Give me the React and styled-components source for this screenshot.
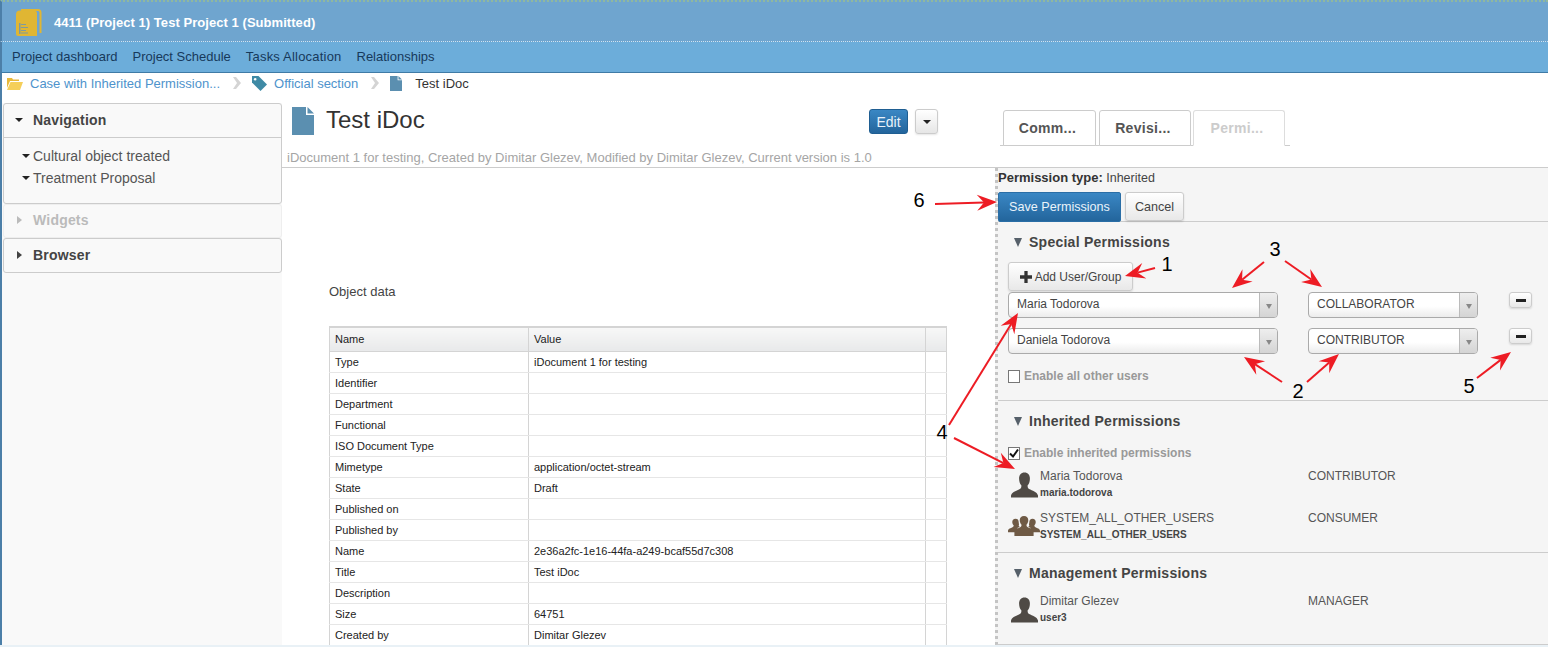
import React from 'react';
import styled, { createGlobalStyle } from 'styled-components';

const GlobalStyle = createGlobalStyle`
  html, body { margin: 0; padding: 0; background: #fff; }
  body { font-family: "Liberation Sans", Arial, sans-serif; color: #444; }
  * { box-sizing: border-box; }
`;

const Page = styled.div`
  position: relative;
  width: 1548px;
  height: 647px;
  overflow: hidden;
  display: flex;
  flex-direction: column;
  background: #fff;
`;

/* header */
const TitleBar = styled.div`
  height: 42px;
  flex: none;
  display: flex;
  align-items: center;
  gap: 12px;
  padding: 2px 0 0 14px;
  background: #6fa5cf;
  border-top: 2px dotted #8fb89f;
  border-left: 2px solid #4c7fa8;
  border-bottom: 1px dotted #cfe3f2;
`;

const TitleText = styled.div`
  color: #fff;
  font-weight: bold;
  font-size: 13px;
  letter-spacing: 0.05px;
`;

const NavBar = styled.div`
  height: 31px;
  flex: none;
  display: flex;
  align-items: center;
  gap: 15px;
  padding: 0 0 1px 10px;
  background: #6cadda;
  border-left: 2px solid #4c7fa8;
  border-bottom: 1px solid #3f7ba6;
`;

const NavLink = styled.span`
  color: #17395a;
  font-size: 13px;
  letter-spacing: ${(p) => p.$ls || 0}px;
`;

const Crumbs = styled.div`
  height: 20px;
  flex: none;
  display: flex;
  align-items: center;
  padding-left: 5px;
  border-left: 2px solid #4c7fa8;
  font-size: 13px;
`;

const CrumbLink = styled.span`
  color: ${(p) => (p.$current ? '#333' : '#4e93cc')};
  margin: ${(p) => (p.$current ? '0 0 0 13px' : '0 0 0 7px')};
`;

const CrumbSep = styled.svg`
  margin: 0 11px 0 13px;
`;

/* body */
const Body = styled.div`
  flex: 1;
  display: flex;
  min-height: 0;
  padding-top: 10px;
  border-left: 2px solid #4c7fa8;
`;

const Sidebar = styled.aside`
  width: 280px;
  flex: none;
  padding-left: 1px;
  background: #f9f9f9;
`;

const Panel = styled.section`
  border: 1px solid ${(p) => (p.$muted ? '#eee' : '#ccc')};
  border-radius: 3px;
  background: #f9f9f9;
`;

const PanelHead = styled.div`
  height: ${(p) => p.$h}px;
  display: flex;
  align-items: center;
  padding: 0 0 2px 11px;
  font-weight: bold;
  font-size: 14px;
  letter-spacing: 0.2px;
  color: ${(p) => (p.$muted ? '#bbb' : '#444')};
  border-bottom: ${(p) => (p.$open ? '1px solid #ccc' : 'none')};
`;

const Caret = styled.i`
  display: block;
  width: 0;
  height: 0;
  margin-right: ${(p) => (p.$right ? '11px' : '10px')};
  border-style: solid;
  border-color: transparent;
  ${(p) =>
    p.$right
      ? `border-width: 4px 0 4px 5px; border-left-color: ${p.$muted ? '#bbb' : '#444'}; margin-left: 2px;`
      : 'border-width: 4px 4px 0 4px; border-top-color: #222;'}
`;

const TreeList = styled.div`
  height: 65px;
  padding: 7px 0 0 18px;
`;

const TreeItem = styled.div`
  height: 22px;
  display: flex;
  align-items: center;
  font-size: 14px;
  color: #555;
`;

const TreeCaret = styled(Caret)`
  margin-right: 3px;
`;

const Main = styled.main`
  flex: 1;
  display: flex;
  flex-direction: column;
  min-width: 0;
`;

const TopRow = styled.div`
  height: 65px;
  flex: none;
  display: flex;
  border-bottom: 1px solid #ccc;
`;

const DocHead = styled.div`
  width: 714px;
  flex: none;
  padding-left: 5px;
`;

const DocTitleRow = styled.div`
  height: 47px;
  display: flex;
  align-items: flex-start;
  padding-left: 5px;
`;

const DocIcon = styled.div`
  margin-top: 4px;
  svg { display: block; }
`;

const DocTitle = styled.h1`
  margin: 0 0 0 12px;
  font-size: 24px;
  line-height: 34px;
  font-weight: normal;
  color: #333;
  flex: 1;
`;

const EditButton = styled.button`
  width: 39px;
  height: 25px;
  margin-top: 6px;
  padding: 0;
  font: 14px "Liberation Sans", Arial, sans-serif;
  color: #e8f2fa;
  background: linear-gradient(#3a87c4, #23659c);
  border: 1px solid #1f5e92;
  border-radius: 3px;
`;

const CaretButton = styled.button`
  width: 23px;
  height: 25px;
  margin: 6px 58px 0 7px;
  padding: 0 0 0 7px;
  background: linear-gradient(#fff, #e6e6e6);
  border: 1px solid #ccc;
  border-radius: 3px;
  box-shadow: 0 1px 2px rgba(0, 0, 0, 0.1);
`;

const DocMeta = styled.div`
  font-size: 13px;
  line-height: 16px;
  color: #a5a5a5;
`;

const Tabs = styled.div`
  width: 290px;
  height: 36px;
  margin: 7px 0 0 4px;
  padding-left: 3px;
  display: flex;
  gap: 3px;
  border-bottom: 1px solid #ccc;
`;

const Tab = styled.div`
  width: ${(p) => p.$w}px;
  height: 36px;
  margin-left: ${(p) => (p.$active ? '-1px' : '0')};
  display: flex;
  align-items: center;
  justify-content: center;
  padding-right: 4px;
  font-weight: bold;
  font-size: 14px;
  letter-spacing: 0.3px;
  color: ${(p) => (p.$active ? '#ccc' : '#555')};
  background: #fff;
  border: 1px solid ${(p) => (p.$active ? '#ddd' : '#ccc')};
  border-bottom: ${(p) => (p.$active ? '1px solid #fff' : '1px solid #ccc')};
  border-radius: 3px 3px 0 0;
`;

const Columns = styled.div`
  flex: 1;
  display: flex;
  min-height: 0;
`;

const DocBody = styled.div`
  width: 713px;
  flex: none;
  padding: 116px 0 0 47px;
  overflow: hidden;
`;

const SectionLabel = styled.p`
  margin: 0 0 26px;
  font-size: 13px;
  line-height: 16px;
  color: #444;
`;

const DataTable = styled.table`
  width: 617px;
  border-collapse: collapse;
  table-layout: fixed;
  font-family: "Liberation Sans", Tahoma, sans-serif;
  font-size: 11px;
  color: #222;
`;

const Th = styled.th`
  height: 24px;
  padding: 0 5px;
  font-weight: normal;
  text-align: left;
  background: linear-gradient(#f7f7f7, #e8e9ea);
  border: 1px solid #d4d4d4;
  border-top-width: 2px;
`;

const Td = styled.td`
  height: 21px;
  padding: 0 5px;
  border: 1px solid #e6e6e6;
  border-left-color: #d4d4d4;
  border-right-color: #d4d4d4;
`;

/* permissions */
const PermPanel = styled.div`
  flex: 1;
  background: #f5f5f5;
  border-left: 3px dotted #c4c4c4;
  border-bottom: 1px solid #ccc;
  font-size: 12px;
`;

const PermHead = styled.div`
  height: 54px;
  border-bottom: 1px solid #ccc;
`;

const PermType = styled.div`
  height: 24px;
  line-height: 19px;
  font-size: 12.5px;
  color: #444;
  b { color: #333; font-size: 13px; }
`;

const PermActions = styled.div`
  display: flex;
  gap: 4px;
`;

const SaveButton = styled.button`
  width: 123px;
  height: 30px;
  padding: 0;
  font: 12.6px "Liberation Sans", Arial, sans-serif;
  color: #eaf3fa;
  background: linear-gradient(#3a87c4, #23659c);
  border: 1px solid #2a6ea6;
  border-radius: 2px;
`;

const GreyButton = styled.button`
  display: flex;
  align-items: center;
  justify-content: center;
  gap: ${(p) => (p.$gap ? `${p.$gap}px` : '0')};
  width: ${(p) => p.$w}px;
  height: ${(p) => p.$h}px;
  margin-bottom: ${(p) => (p.$mb ? `${p.$mb}px` : '0')};
  padding: 0;
  font: ${(p) => p.$fs || 12}px "Liberation Sans", Arial, sans-serif;
  color: #444;
  background: linear-gradient(#fff, #e8e8e8);
  border: 1px solid #ccc;
  border-radius: 3px;
  box-shadow: 0 1px 2px rgba(0, 0, 0, 0.12);
`;

const PermSection = styled.section`
  height: ${(p) => p.$h}px;
  padding-left: 10px;
  border-bottom: ${(p) => (p.$last ? 'none' : '1px solid #ccc')};
`;

const PermTitle = styled.h3`
  height: 40px;
  margin: 0 0 0 6px;
  display: flex;
  align-items: center;
  font-size: 14px;
  letter-spacing: 0.25px;
  color: #444;
`;

const DownMark = styled.i`
  display: block;
  width: 0;
  height: 0;
  margin-right: 7px;
  border-style: solid;
  border-color: #56606a transparent transparent;
  border-width: 9px 4px 0;
`;

const SpecialRow = styled.div`
  display: flex;
  margin-bottom: 10px;
`;

const Select = styled.div`
  width: ${(p) => p.$w}px;
  height: 26px;
  margin-right: ${(p) => p.$mr}px;
  display: flex;
  align-items: center;
  padding-left: 8px;
  border: 1px solid #aaa;
  border-radius: 4px;
  background: linear-gradient(#fff 55%, #ececec);
  color: #444;
  overflow: hidden;
`;

const SelectValue = styled.span`
  flex: 1;
  padding-bottom: 3px;
`;

const SelectArrow = styled.span`
  width: 18px;
  height: 100%;
  display: flex;
  align-items: center;
  justify-content: center;
  padding-top: 3px;
  background: linear-gradient(#eee, #d4d4d4);
  border-left: 1px solid #bbb;
  &::after {
    content: '';
    border-style: solid;
    border-color: #888 transparent transparent;
    border-width: 5px 3px 0;
  }
`;

const CheckLine = styled.label`
  display: flex;
  align-items: center;
  gap: 4px;
  margin-top: ${(p) => p.$mt}px;
  font-weight: bold;
  color: #999;
`;

const CheckBox = styled.span`
  width: 12px;
  height: 13px;
  display: block;
  border: 1px solid #777;
  background: #fff;
  svg { display: block; }
`;

const UserList = styled.div`
  margin-top: ${(p) => p.$mt}px;
`;

const UserRow = styled.div`
  height: 42px;
  display: grid;
  grid-template-columns: 32px 268px 1fr;
`;

const UserIcon = styled.div`
  padding: ${(p) => (p.$group ? '6px 0 0' : '4px 0 0 3px')};
  svg { display: block; }
`;

const UserText = styled.div`
  font-size: 12px;
  line-height: 16px;
  color: #555;
`;

const UserLogin = styled.div`
  margin-top: 1px;
  font-size: 10px;
  font-weight: bold;
  color: #444;
`;

const UserRole = styled.div`
  font-size: 12px;
  line-height: 16px;
  color: #555;
`;

const Footer = styled.div`
  height: 2px;
  flex: none;
  background: #e9f1f6;
`;

/* annotations drawn over the page */
const Overlay = styled.svg`
  position: absolute;
  inset: 0;
  pointer-events: none;
`;

const Mark = styled.text`
  font-family: "Liberation Sans", Arial, sans-serif;
  font-size: 20px;
  fill: #000;
  text-anchor: middle;
`;

const Arrow = ({ from, to }) => {
  const a = Math.atan2(to[1] - from[1], to[0] - from[0]);
  const pt = (back, side) => [
    to[0] - back * Math.cos(a) - side * Math.sin(a),
    to[1] - back * Math.sin(a) + side * Math.cos(a),
  ];
  const head = [to, pt(20, 8), pt(13, 0), pt(20, -8)].map((p) => p.join(',')).join(' ');
  const end = pt(13, 0);
  return (
    <g>
      <line x1={from[0]} y1={from[1]} x2={end[0]} y2={end[1]} stroke="#ed1c24" strokeWidth="2" />
      <polygon points={head} fill="#ed1c24" />
    </g>
  );
};

const FileIcon = ({ w = 12, h = 15 }) => (
  <svg width={w} height={h} viewBox="0 0 22 28" preserveAspectRatio="none">
    <path d="M0 0h14v8h8v20H0z" fill="#5b8fb0" />
    <path d="M15.500 0L22 6.500h-6.500z" fill="#5b8fb0" />
  </svg>
);

const Person = () => (
  <svg width="27" height="26" viewBox="0 0 28 26">
    <path
      d="M14 0c-3.600 0-5.600 2.600-5.600 6.400 0 3 1 5.400 2.400 7 0 1.800-.4 3-1.600 3.800C6 19 1 19.800 0 24v2h28v-2c-1-4.200-6-5-9.200-6.800-1.200-.8-1.600-2-1.600-3.800 1.400-1.600 2.400-4 2.400-7C19.600 2.600 17.600 0 14 0z"
      fill="#4f4a45"
    />
  </svg>
);

const People = () => (
  <svg width="32" height="20" viewBox="0 0 30 22" preserveAspectRatio="none">
    <g fill="#6f5a45">
      <path d="M7 3c-2 0-3 1.500-3 3.500 0 1.600.6 3 1.300 3.800 0 1-.3 1.700-1 2.100C2.800 13.400 0 14 0 16.500V18h9v-5l2-1c-.6-.5-1-1-1-1.700C10.700 9.500 10 8 10 6.500 10 4.500 9 3 7 3z" />
      <path d="M23 3c2 0 3 1.500 3 3.500 0 1.600-.6 3-1.300 3.800 0 1 .3 1.700 1 2.100 1.500 1 4.300 1.600 4.300 4.100V18h-9v-5l-2-1c.6-.5 1-1 1-1.700C19.300 9.500 20 8 20 6.500 20 4.500 21 3 23 3z" />
      <path d="M15 0c-2.600 0-4 2-4 4.600 0 2.100.8 3.900 1.700 5 0 1.300-.3 2.200-1.300 2.800-2.100 1.300-5.400 2-5.400 5V22h18v-4.600c0-3-3.300-3.700-5.400-5-1-.6-1.300-1.500-1.300-2.800.9-1.100 1.700-2.900 1.700-5C19 2 17.600 0 15 0z" />
    </g>
  </svg>
);

const rows = [
  ['Type', 'iDocument 1 for testing'],
  ['Identifier', ''],
  ['Department', ''],
  ['Functional', ''],
  ['ISO Document Type', ''],
  ['Mimetype', 'application/octet-stream'],
  ['State', 'Draft'],
  ['Published on', ''],
  ['Published by', ''],
  ['Name', '2e36a2fc-1e16-44fa-a249-bcaf55d7c308'],
  ['Title', 'Test iDoc'],
  ['Description', ''],
  ['Size', '64751'],
  ['Created by', 'Dimitar Glezev'],
];

const Chevron = () => (
  <CrumbSep width="8" height="12" viewBox="0 0 8 12">
    <path d="M0 0h3l5 6-5 6H0l4-6z" fill="#d4d4d4" />
  </CrumbSep>
);

const Minus = () => (
  <GreyButton $w={23} $h={16}>
    <svg width="10" height="3" viewBox="0 0 10 3">
      <rect width="10" height="3" fill="#222" />
    </svg>
  </GreyButton>
);

const App = () => {
  return (
    <Page>
      <GlobalStyle />
      <TitleBar>
        <svg width="26" height="28" viewBox="0 0 26 28">
          <path d="M5 0h17a3.500 3.500 0 0 1 3.500 3.500V24h-2V3.500A1.500 1.500 0 0 0 22 2H5z" fill="#e0b633" />
          <path d="M4 1.500h14a3 3 0 0 1 3 3V27H2a2 2 0 0 1-2-2V5.500a4 4 0 0 1 4-4z" fill="#e0b633" />
          <path d="M3 14h1.500v11H3zM5 15h5v1H5zM5 18h7v1H5zM5 21h5v1H5zM5 23.500h7v1H5z" fill="#7f9a9e" />
        </svg>
        <TitleText>4411 (Project 1) Test Project 1 (Submitted)</TitleText>
      </TitleBar>
      <NavBar>
        <NavLink>Project dashboard</NavLink>
        <NavLink>Project Schedule</NavLink>
        <NavLink $ls={0.2}>Tasks Allocation</NavLink>
        <NavLink>Relationships</NavLink>
      </NavBar>
      <Crumbs>
        <svg width="16" height="13" viewBox="0 0 16 13">
          <path d="M0 1h5l1 1.500h6V4H3L0 11z" fill="#e8b93a" />
          <path d="M3.500 5H16l-3 8H0z" fill="#f5cf5a" />
        </svg>
        <CrumbLink>Case with Inherited Permission...</CrumbLink>
        <Chevron />
        <svg width="15" height="15" viewBox="0 0 15 15">
          <path d="M0 0h6.500L15 8.500 8.500 15 0 6.500z" fill="#3f8aa5" />
          <circle cx="3.200" cy="3.200" r="1.300" fill="#fff" />
        </svg>
        <CrumbLink>Official section</CrumbLink>
        <Chevron />
        <FileIcon />
        <CrumbLink $current>Test iDoc</CrumbLink>
      </Crumbs>
      <Body>
        <Sidebar>
          <Panel>
            <PanelHead $open $h={34}>
              <Caret />
              Navigation
            </PanelHead>
            <TreeList>
              <TreeItem>
                <TreeCaret />
                Cultural object treated
              </TreeItem>
              <TreeItem>
                <TreeCaret />
                Treatment Proposal
              </TreeItem>
            </TreeList>
          </Panel>
          <Panel $muted>
            <PanelHead $muted $h={32}>
              <Caret $right $muted />
              Widgets
            </PanelHead>
          </Panel>
          <Panel>
            <PanelHead $h={33}>
              <Caret $right />
              Browser
            </PanelHead>
          </Panel>
        </Sidebar>
        <Main>
          <TopRow>
            <DocHead>
              <DocTitleRow>
                <DocIcon>
                  <FileIcon w={22} h={28} />
                </DocIcon>
                <DocTitle>Test iDoc</DocTitle>
                <EditButton>Edit</EditButton>
                <CaretButton>
                  <Caret />
                </CaretButton>
              </DocTitleRow>
              <DocMeta>
                iDocument 1 for testing, Created by Dimitar Glezev, Modified by Dimitar Glezev, Current version is 1.0
              </DocMeta>
            </DocHead>
            <Tabs>
              <Tab $w={93}>Comm...</Tab>
              <Tab $w={92}>Revisi...</Tab>
              <Tab $w={92} $active>
                Permi...
              </Tab>
            </Tabs>
          </TopRow>
          <Columns>
            <DocBody>
              <SectionLabel>Object data</SectionLabel>
              <DataTable>
                <colgroup>
                  <col width="199" />
                  <col width="397" />
                  <col width="21" />
                </colgroup>
                <thead>
                  <tr>
                    <Th>Name</Th>
                    <Th>Value</Th>
                    <Th />
                  </tr>
                </thead>
                <tbody>
                  {rows.map(([name, value]) => (
                    <tr key={name}>
                      <Td>{name}</Td>
                      <Td>{value}</Td>
                      <Td />
                    </tr>
                  ))}
                </tbody>
              </DataTable>
            </DocBody>
            <PermPanel>
              <PermHead>
                <PermType>
                  <b>Permission type:</b> Inherited
                </PermType>
                <PermActions>
                  <SaveButton>Save Permissions</SaveButton>
                  <GreyButton $w={59} $h={29} $fs={12.6}>
                    Cancel
                  </GreyButton>
                </PermActions>
              </PermHead>
              <PermSection $h={179}>
                <PermTitle>
                  <DownMark />
                  Special Permissions
                </PermTitle>
                <GreyButton $w={125} $h={29} $gap={3} $mb={1}>
                  <svg width="12" height="12" viewBox="0 0 11 11">
                    <path d="M4 0h3v4h4v3H7v4H4V7H0V4h4z" fill="#333" />
                  </svg>
                  Add User/Group
                </GreyButton>
                <SpecialRow>
                  <Select $w={270} $mr={30}>
                    <SelectValue>Maria Todorova</SelectValue>
                    <SelectArrow />
                  </Select>
                  <Select $w={170} $mr={31}>
                    <SelectValue>COLLABORATOR</SelectValue>
                    <SelectArrow />
                  </Select>
                  <Minus />
                </SpecialRow>
                <SpecialRow>
                  <Select $w={270} $mr={30}>
                    <SelectValue>Daniela Todorova</SelectValue>
                    <SelectArrow />
                  </Select>
                  <Select $w={170} $mr={31}>
                    <SelectValue>CONTRIBUTOR</SelectValue>
                    <SelectArrow />
                  </Select>
                  <Minus />
                </SpecialRow>
                <CheckLine $mt={15}>
                  <CheckBox />
                  Enable all other users
                </CheckLine>
              </PermSection>
              <PermSection $h={152}>
                <PermTitle>
                  <DownMark />
                  Inherited Permissions
                </PermTitle>
                <CheckLine $mt={5}>
                  <CheckBox>
                    <svg width="10" height="11" viewBox="0 0 10 11">
                      <path d="M1 5.500l3 3 5-7" fill="none" stroke="#111" strokeWidth="2" />
                    </svg>
                  </CheckBox>
                  Enable inherited permissions
                </CheckLine>
                <UserList $mt={8}>
                  <UserRow>
                    <UserIcon>
                      <Person />
                    </UserIcon>
                    <UserText>
                      Maria Todorova
                      <UserLogin>maria.todorova</UserLogin>
                    </UserText>
                    <UserRole>CONTRIBUTOR</UserRole>
                  </UserRow>
                  <UserRow>
                    <UserIcon $group>
                      <People />
                    </UserIcon>
                    <UserText>
                      SYSTEM_ALL_OTHER_USERS
                      <UserLogin>SYSTEM_ALL_OTHER_USERS</UserLogin>
                    </UserText>
                    <UserRole>CONSUMER</UserRole>
                  </UserRow>
                </UserList>
              </PermSection>
              <PermSection $h={92} $last>
                <PermTitle>
                  <DownMark />
                  Management Permissions
                </PermTitle>
                <UserRow>
                  <UserIcon>
                    <Person />
                  </UserIcon>
                  <UserText>
                    Dimitar Glezev
                    <UserLogin>user3</UserLogin>
                  </UserText>
                  <UserRole>MANAGER</UserRole>
                </UserRow>
              </PermSection>
            </PermPanel>
          </Columns>
        </Main>
      </Body>
      <Footer />
      <Overlay width="1548" height="647" viewBox="0 0 1548 647">
        <Mark x="919" y="207">6</Mark>
        <Arrow from={[935, 204]} to={[997, 202]} />
        <Mark x="1167" y="271">1</Mark>
        <Arrow from={[1155, 268]} to={[1125, 276]} />
        <Mark x="1275" y="256">3</Mark>
        <Arrow from={[1264, 262]} to={[1232, 288]} />
        <Arrow from={[1285, 261]} to={[1322, 287]} />
        <Mark x="1298" y="398">2</Mark>
        <Arrow from={[1282, 382]} to={[1244, 357]} />
        <Arrow from={[1307, 382]} to={[1339, 354]} />
        <Mark x="1469" y="393">5</Mark>
        <Arrow from={[1477, 378]} to={[1511, 352]} />
        <Mark x="942" y="439">4</Mark>
        <Arrow from={[949, 425]} to={[1018, 313]} />
        <Arrow from={[954, 438]} to={[1015, 469]} />
      </Overlay>
    </Page>
  );
};

export default App;
